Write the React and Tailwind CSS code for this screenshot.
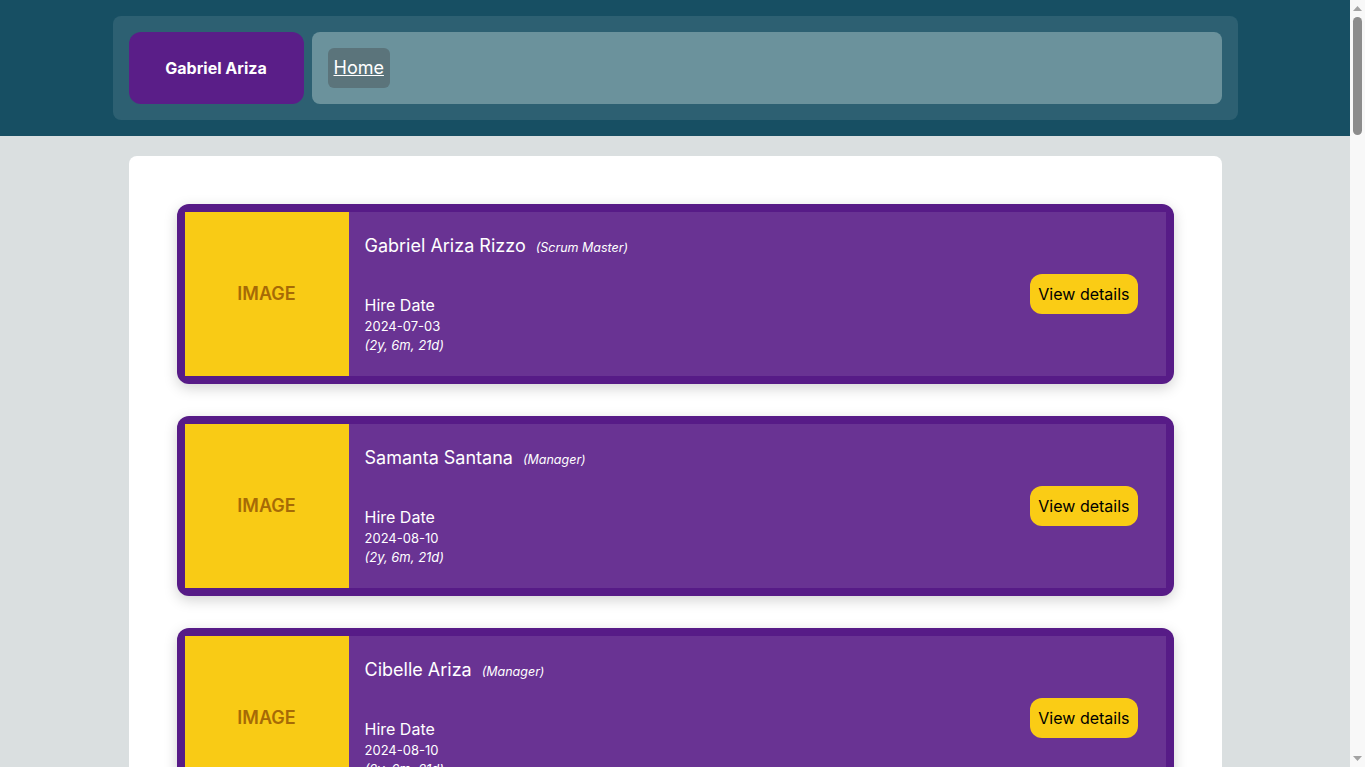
const employees = [
  { id: 1, name: 'Gabriel Ariza Rizzo', role: 'Scrum Master', hireDate: '2024-07-03', tenure: '(2y, 6m, 21d)' },
  { id: 2, name: 'Samanta Santana', role: 'Manager', hireDate: '2024-08-10', tenure: '(2y, 6m, 21d)' },
  { id: 3, name: 'Cibelle Ariza', role: 'Manager', hireDate: '2024-08-10', tenure: '(2y, 6m, 21d)' },
  { id: 4, name: 'Lucas Rizzo', role: 'Developer', hireDate: '2024-09-01', tenure: '(2y, 5m, 2d)' },
];

function EmployeeCard({ employee }) {
  return (
    <div className="flex h-[180px] shrink-0 rounded-xl bg-[#571b87] p-2 shadow-[0_4px_14px_rgba(0,0,0,0.18)]">
      <div className="flex w-[164px] shrink-0 items-center justify-center bg-[#f9cb15]">
        <span className="text-lg font-semibold text-[#a66a06]">IMAGE</span>
      </div>
      <div className="flex flex-1 items-center justify-between bg-[#693393] pl-4 pr-7">
        <div className="flex h-full flex-col justify-between pt-5 pb-[21px] text-white">
          <div className="flex items-baseline gap-2.5">
            <span className="text-lg">{employee.name}</span>
            <span className="text-[12.5px] italic">({employee.role})</span>
          </div>
          <div className="flex flex-col">
            <span className="text-base leading-6">Hire Date</span>
            <span className="text-[13px] leading-[19px]">{employee.hireDate}</span>
            <span className="text-[13px] leading-[19px] italic">{employee.tenure}</span>
          </div>
        </div>
        <button className="h-10 rounded-xl bg-[#facc15] px-2 text-base text-black">
          View details
        </button>
      </div>
    </div>
  );
}

// fake browser scrollbar so the page is centered like in the original
function Scrollbar() {
  return (
    <div className="flex w-[15px] shrink-0 flex-col items-center bg-[#f8f8f8] py-1">
      <svg width="9" height="5" viewBox="0 0 9 5" className="mt-[2px]">
        <path d="M0 5 L4.5 0 L9 5 Z" fill="#a3a3a3" />
      </svg>
      <div className="mt-[6px] h-[118px] w-[9px] rounded-full bg-[#8c8c8c]" />
      <div className="flex-1" />
      <svg width="9" height="5" viewBox="0 0 9 5" className="mb-[2px]">
        <path d="M0 0 L9 0 L4.5 5 Z" fill="#a3a3a3" />
      </svg>
    </div>
  );
}

export default function App() {
  return (
    <div className="flex h-screen overflow-hidden font-['Inter','Liberation_Sans',sans-serif]">
      <div className="flex-1 overflow-hidden bg-[#dadfe0]">
        <header className="bg-[#174f63] py-4">
          <div className="mx-auto flex w-[1125px] gap-2 rounded-lg bg-[#2d6072] p-4">
            <div className="flex h-[72px] w-[175px] items-center justify-center rounded-xl bg-[#5a1e88]">
              <span className="text-base font-bold text-white">Gabriel Ariza</span>
            </div>
            <nav className="flex flex-1 items-center rounded-lg bg-[#6b929c] px-4">
              <a href="#" className="rounded-md bg-[#5b747b] px-1.5 py-2 text-lg leading-6 text-white underline">
                Home
              </a>
            </nav>
          </div>
        </header>
        <main className="pt-5 pb-10">
          <div className="mx-auto flex w-[1093px] flex-col gap-8 rounded-lg bg-white p-12">
            {employees.map((e) => (
              <EmployeeCard key={e.id} employee={e} />
            ))}
          </div>
        </main>
      </div>
      <Scrollbar />
    </div>
  );
}
